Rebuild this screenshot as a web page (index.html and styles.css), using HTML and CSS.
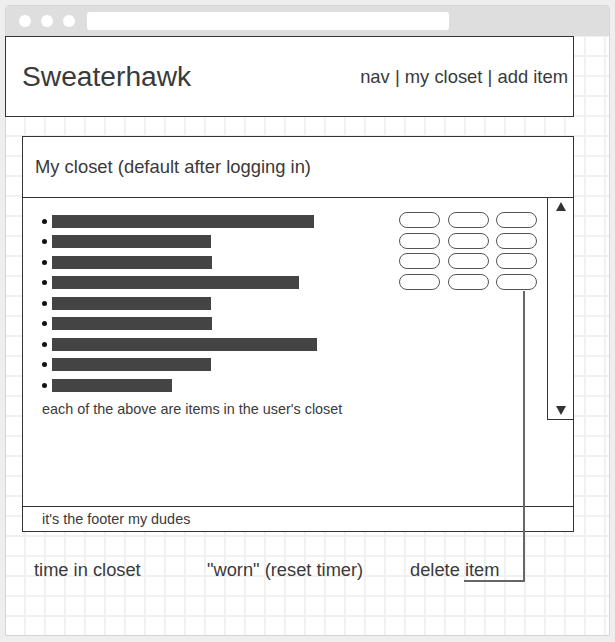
FILE: index.html
```html
<!DOCTYPE html>
<html lang="en">
<head>
    <meta charset="UTF-8">
    <meta name="viewport" content="width=device-width, initial-scale=1.0">
    <title>Sweaterhawk - My closet</title>
    <link rel="stylesheet" href="styles.css">
</head>
<body>

    <div class="browser">
        <!-- Fake browser chrome -->
        <div class="titlebar">
            <span class="dot"></span>
            <span class="dot"></span>
            <span class="dot"></span>
            <span class="address"></span>
        </div>

        <div class="page">
            <header class="site-header">
                <span class="logo">Sweaterhawk</span>
                <nav class="nav">nav | my closet | add item</nav>
            </header>

            <section class="closet">
                <h1 class="closet-title">My closet (default after logging in)</h1>

                <div class="closet-body">
                    <div class="items">
                        <ul class="item-list">
                            <li><span class="bar" style="width: 262px"></span></li>
                            <li><span class="bar" style="width: 159px"></span></li>
                            <li><span class="bar" style="width: 160px"></span></li>
                            <li><span class="bar" style="width: 247px"></span></li>
                            <li><span class="bar" style="width: 159px"></span></li>
                            <li><span class="bar" style="width: 160px"></span></li>
                            <li><span class="bar" style="width: 265px"></span></li>
                            <li><span class="bar" style="width: 159px"></span></li>
                            <li><span class="bar" style="width: 120px"></span></li>
                        </ul>
                        <p class="note">each of the above are items in the user's closet</p>
                    </div>

                    <div class="actions">
                        <span class="pill"></span><span class="pill"></span><span class="pill"></span>
                        <span class="pill"></span><span class="pill"></span><span class="pill"></span>
                        <span class="pill"></span><span class="pill"></span><span class="pill"></span>
                        <span class="pill"></span><span class="pill"></span><span class="pill"></span>
                    </div>

                    <div class="scrollbar">
                        <span class="arrow-up"></span>
                        <span class="arrow-down"></span>
                    </div>
                </div>

                <footer class="closet-footer">it's the footer my dudes</footer>
            </section>

            <!-- Annotations for the button columns -->
            <div class="labels">
                <span>time in closet</span>
                <span>"worn" (reset timer)</span>
                <span>delete item</span>
            </div>
        </div>

        <div class="connector"></div>
    </div>

</body>
</html>
```

FILE: styles.css
```css
/* Wireframe page inside a fake browser window */
body {
    font-family: "Liberation Sans", Arial, sans-serif;
    background-color: #eeeeee;
    margin: 0;
    color: #3a3a3a;
}

.browser {
    position: relative;
    box-sizing: border-box;
    width: 605px;
    height: 631px;
    margin: 5px 0 0 5px;
    border: 1px solid #d6d6d6;
    border-radius: 4px 4px 0 0;
    display: flex;
    flex-direction: column;
}

.titlebar {
    height: 30px;
    background-color: #dedede;
    border-radius: 3px 3px 0 0;
    display: flex;
    align-items: center;
    padding-left: 13px;
    gap: 10px;
}

.dot {
    width: 12px;
    height: 12px;
    border-radius: 50%;
    background-color: #fff;
}

.address {
    width: 362px;
    height: 18px;
    margin-left: 2px;
    background-color: #fff;
    border-radius: 3px;
}

.page {
    flex: 1;
    background-color: #fff;
    background-image:
        linear-gradient(to right, #f1f1f1 2px, transparent 2px),
        linear-gradient(to bottom, #f1f1f1 2px, transparent 2px);
    background-size: 20px 20px;
    background-position: 18px 19px;
}

/* Site header */
.site-header {
    box-sizing: border-box;
    width: 569px;
    height: 81px;
    margin-left: -1px;
    background-color: #fff;
    border: 1px solid #333;
    display: flex;
    justify-content: space-between;
    align-items: center;
    padding: 0 5px 0 16px;
}

.logo {
    font-size: 28.2px;
}

.nav {
    font-size: 18.4px;
}

/* Closet card */
.closet {
    box-sizing: border-box;
    width: 552px;
    margin: 19px 0 0 16px;
    background-color: #fff;
    border: 1px solid #333;
}

.closet-title {
    margin: 0;
    height: 60px;
    line-height: 60px;
    padding-left: 12px;
    font-size: 18.4px;
    font-weight: normal;
    border-bottom: 1px solid #333;
}

.closet-body {
    height: 308px;
    display: flex;
}

.items {
    flex: 1;
    padding: 13px 0 0 19px;
}

.item-list {
    list-style: none;
    margin: 0;
    padding: 0;
}

.item-list li {
    height: 20.5px;
    display: flex;
    align-items: center;
}

.item-list li::before {
    content: "";
    width: 5px;
    height: 5px;
    border-radius: 50%;
    background-color: #111;
    margin-right: 5px;
}

.bar {
    height: 13px;
    background-color: #444;
}

.note {
    margin: 3px 0 0;
    font-size: 14.4px;
    line-height: 20px;
}

.actions {
    display: grid;
    grid-template-columns: repeat(3, 41px);
    grid-auto-rows: 16px;
    column-gap: 7.5px;
    row-gap: 4.5px;
    margin: 14px 10px 0 0;
}

.pill {
    box-sizing: border-box;
    border: 1px solid #555;
    border-radius: 8px;
    background-color: #fff;
}

.scrollbar {
    width: 25px;
    height: 213px;
    border-left: 1px solid #333;
    border-bottom: 1px solid #333;
    display: flex;
    flex-direction: column;
    justify-content: space-between;
    align-items: center;
    padding: 4px 0;
}

.arrow-up {
    width: 0;
    height: 0;
    border-left: 5px solid transparent;
    border-right: 5px solid transparent;
    border-bottom: 9px solid #333;
}

.arrow-down {
    width: 0;
    height: 0;
    border-left: 5px solid transparent;
    border-right: 5px solid transparent;
    border-top: 9px solid #333;
}

.closet-footer {
    height: 24px;
    line-height: 24px;
    padding-left: 19px;
    font-size: 14.4px;
    border-top: 1px solid #333;
}

/* Annotation labels under the card */
.labels {
    display: grid;
    grid-template-columns: 173px 203px auto;
    padding-left: 28px;
    margin-top: 27px;
    font-size: 18.3px;
    line-height: 22px;
}

.connector {
    position: absolute;
    left: 458px;
    top: 285px;
    width: 59px;
    height: 289px;
    border-right: 2px solid #666;
    border-bottom: 2px solid #666;
}
```
